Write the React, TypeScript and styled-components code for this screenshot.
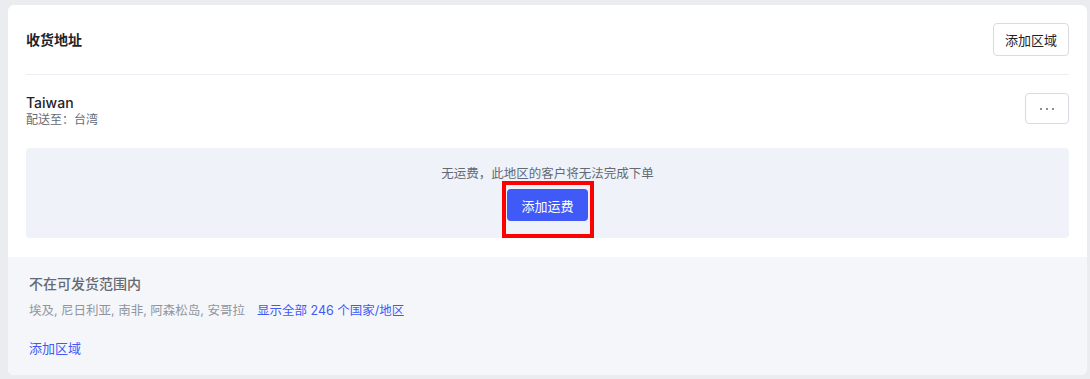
import React from 'react';
import styled, { createGlobalStyle } from 'styled-components';

const GlobalStyle = createGlobalStyle`
  html, body {
    margin: 0;
    padding: 0;
    background: #eaecf0;
  }
  body {
    font-family: Inter, "Noto Sans CJK SC", "Noto Sans", sans-serif;
    color: #1f2329;
    -webkit-font-smoothing: antialiased;
  }
  #root {
    padding: 5px 3px 5px 8px;
  }
`;

const hiddenCountries = ['埃及', '尼日利亚', '南非', '阿森松岛', '安哥拉'];

export default function App() {
  return (
    <>
      <GlobalStyle />
      <Card>
        <Body>
          <Header>
            <Title>收货地址</Title>
            <OutlineButton>添加区域</OutlineButton>
          </Header>
          <ZoneRow>
            <ZoneInfo>
              <ZoneName>Taiwan</ZoneName>
              <ZoneDesc>配送至：台湾</ZoneDesc>
            </ZoneInfo>
            <MoreButton aria-label="更多">
              <Dot />
              <Dot />
              <Dot />
            </MoreButton>
          </ZoneRow>
          <EmptyRates>
            <EmptyText>无运费，此地区的客户将无法完成下单</EmptyText>
            <Highlighted>
              <PrimaryButton>添加运费</PrimaryButton>
              <RedMark />
            </Highlighted>
          </EmptyRates>
        </Body>
        <Footer>
          <FooterTitle>不在可发货范围内</FooterTitle>
          <CountryLine>
            {hiddenCountries.join(', ')}
            <LinkText>显示全部 246 个国家/地区</LinkText>
          </CountryLine>
          <FooterLink>添加区域</FooterLink>
        </Footer>
      </Card>
    </>
  );
}

const Card = styled.div`
  background: #fff;
  border-radius: 6px;
  overflow: hidden;
`;

const Body = styled.div`
  padding: 0 18px 19px;
`;

const Header = styled.div`
  display: flex;
  align-items: center;
  justify-content: space-between;
  padding: 18px 0;
  border-bottom: 1px solid #eceef3;
`;

const Title = styled.span`
  font-size: 14px;
  font-weight: 600;
  line-height: 20px;
  color: #1f2329;
`;

const OutlineButton = styled.button`
  height: 33px;
  padding: 0 11px;
  border: 1px solid #d8dbe3;
  border-radius: 4px;
  background: #fff;
  font-family: inherit;
  font-size: 13px;
  color: #1f2329;
  cursor: pointer;
`;

const ZoneRow = styled.div`
  display: flex;
  justify-content: space-between;
  align-items: flex-start;
  padding-top: 18px;
`;

const ZoneInfo = styled.div`
  display: flex;
  flex-direction: column;
`;

const ZoneName = styled.span`
  font-size: 14px;
  font-weight: 500;
  line-height: 19px;
  color: #1f2329;
`;

const ZoneDesc = styled.span`
  font-size: 12px;
  line-height: 16px;
  color: #646a73;
`;

const MoreButton = styled.button`
  width: 44px;
  height: 31px;
  display: flex;
  align-items: center;
  justify-content: center;
  gap: 4px;
  border: 1px solid #d8dbe3;
  border-radius: 4px;
  background: #fff;
  cursor: pointer;
`;

const Dot = styled.span`
  width: 2px;
  height: 2px;
  border-radius: 50%;
  background: #646a73;
`;

const EmptyRates = styled.div`
  margin-top: 20px;
  padding: 17px 0 17px;
  background: #eff2f8;
  border-radius: 4px;
  display: flex;
  flex-direction: column;
  align-items: center;
  gap: 6px;
`;

const EmptyText = styled.span`
  font-size: 12.5px;
  line-height: 18px;
  color: #646a73;
`;

const Highlighted = styled.div`
  position: relative;
`;

const PrimaryButton = styled.button`
  height: 32px;
  padding: 0 14px;
  border: none;
  border-radius: 4px;
  background: #3f5af7;
  color: #fff;
  font-family: inherit;
  font-size: 13px;
  cursor: pointer;
`;

const RedMark = styled.div`
  position: absolute;
  left: -5px;
  top: -8px;
  width: 92px;
  height: 57px;
  box-sizing: border-box;
  border: 4px solid #ff0000;
  pointer-events: none;
`;

const Footer = styled.div`
  background: #f5f6fa;
  padding: 17px 21px 17px;
  display: flex;
  flex-direction: column;
  align-items: flex-start;
`;

const FooterTitle = styled.span`
  font-size: 14px;
  font-weight: 500;
  line-height: 20px;
  color: #646a73;
`;

const CountryLine = styled.span`
  margin-top: 7px;
  font-size: 12.5px;
  line-height: 20px;
  color: #8f959e;
`;

const LinkText = styled.a`
  margin-left: 12px;
  color: #3f5af7;
  cursor: pointer;
`;

const FooterLink = styled.a`
  margin-top: 17px;
  font-size: 13px;
  line-height: 20px;
  color: #3f5af7;
  cursor: pointer;
`;
